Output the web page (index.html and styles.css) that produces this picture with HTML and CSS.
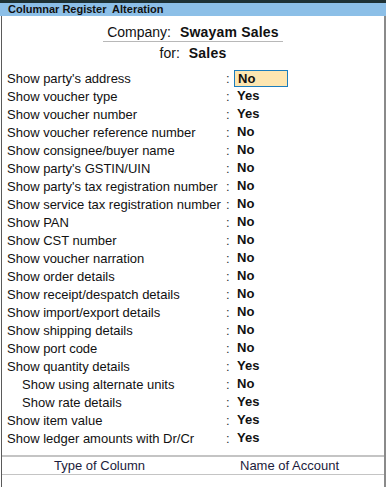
FILE: index.html
```html
<!DOCTYPE html>
<html>
<head lang="en">
    <meta charset="UTF-8">
    <title>Columnar Register Alteration</title>
    <link rel="stylesheet" href="styles.css">
</head>
<body>
<div class="topbar"></div>
<div class="titlebar">Columnar Register&nbsp; Alteration</div>
<div class="panel">
    <div class="head">
        <div class="company"><span class="lbl">Company:</span><b>Swayam Sales</b></div>
        <div class="for"><span class="lbl">for:</span><b>Sales</b></div>
    </div>
    <ul class="opts">
        <li><span class="name">Show party's address</span><span class="colon">:</span><span class="val active">No</span></li>
        <li><span class="name">Show voucher type</span><span class="colon">:</span><span class="val">Yes</span></li>
        <li><span class="name">Show voucher number</span><span class="colon">:</span><span class="val">Yes</span></li>
        <li><span class="name">Show voucher reference number</span><span class="colon">:</span><span class="val">No</span></li>
        <li><span class="name">Show consignee/buyer name</span><span class="colon">:</span><span class="val">No</span></li>
        <li><span class="name">Show party's GSTIN/UIN</span><span class="colon">:</span><span class="val">No</span></li>
        <li><span class="name">Show party's tax registration number</span><span class="colon">:</span><span class="val">No</span></li>
        <li><span class="name">Show service tax registration number</span><span class="colon">:</span><span class="val">No</span></li>
        <li><span class="name">Show PAN</span><span class="colon">:</span><span class="val">No</span></li>
        <li><span class="name">Show CST number</span><span class="colon">:</span><span class="val">No</span></li>
        <li><span class="name">Show voucher narration</span><span class="colon">:</span><span class="val">No</span></li>
        <li><span class="name">Show order details</span><span class="colon">:</span><span class="val">No</span></li>
        <li><span class="name">Show receipt/despatch details</span><span class="colon">:</span><span class="val">No</span></li>
        <li><span class="name">Show import/export details</span><span class="colon">:</span><span class="val">No</span></li>
        <li><span class="name">Show shipping details</span><span class="colon">:</span><span class="val">No</span></li>
        <li><span class="name">Show port code</span><span class="colon">:</span><span class="val">No</span></li>
        <li><span class="name">Show quantity details</span><span class="colon">:</span><span class="val">Yes</span></li>
        <li class="sub"><span class="name">Show using alternate units</span><span class="colon">:</span><span class="val">No</span></li>
        <li class="sub"><span class="name">Show rate details</span><span class="colon">:</span><span class="val">Yes</span></li>
        <li><span class="name">Show item value</span><span class="colon">:</span><span class="val">Yes</span></li>
        <li><span class="name">Show ledger amounts with Dr/Cr</span><span class="colon">:</span><span class="val">Yes</span></li>
    </ul>
    <div class="cols">
        <span class="col-type">Type of Column</span>
        <span class="col-acc">Name of Account</span>
    </div>
</div>
</body>
</html>
```

FILE: styles.css
```css
*{
    margin: 0;
    padding: 0;
    box-sizing: border-box;
}
ul{
    list-style: none;
}
body{
    width: 386px;
    height: 487px;
    overflow: hidden;
    background-color: #fff;
    font-family: "Liberation Sans", Arial, sans-serif;
    color: #111;
}
.topbar{
    height: 3px;
    background-color: #1e3134;
}
.titlebar{
    height: 13px;
    background-color: #8cbfe7;
    font-size: 11px;
    font-weight: bold;
    line-height: 13px;
    padding-left: 8px;
    color: #111;
}
.panel{
    height: 471px;
    margin-left: 1px;
    border-left: 1px solid #5a5a5a;
    border-right: 2px solid #8a8a8a;
    display: flex;
    flex-direction: column;
}
.head{
    display: flex;
    flex-direction: column;
    align-items: center;
    padding-top: 8px;
    font-size: 14px;
}
.head .lbl{
    margin-right: 9px;
}
.head b{
    letter-spacing: 0.2px;
}
.company{
    height: 18px;
    line-height: 17px;
    padding: 0 4px;
    border-bottom: 1px solid #b8b8b8;
}
.for{
    height: 21px;
    line-height: 22px;
}
.opts{
    padding-top: 6px;
    font-size: 13px;
}
.opts li{
    display: flex;
    align-items: center;
    height: 18px;
}
.name{
    width: 224px;
    padding-left: 5px;
}
.sub .name{
    padding-left: 20px;
}
.colon{
    width: 8px;
    color: #333;
}
.val{
    font-weight: bold;
    padding-left: 3px;
    line-height: 16px;
}
.val.active{
    width: 54px;
    height: 17px;
    padding-left: 3px;
    background-color: #fde6b1;
    border: 1px solid #1b7dbd;
    line-height: 15px;
}
.cols{
    margin-top: auto;
    margin-bottom: 12px;
    height: 20px;
    border-top: 2px solid #c4c4c4;
    border-bottom: 1px solid #c4c4c4;
    display: flex;
    align-items: center;
    font-size: 13px;
    color: #1c1c3c;
}
.col-type{
    padding-left: 52px;
    width: 238px;
}
```
